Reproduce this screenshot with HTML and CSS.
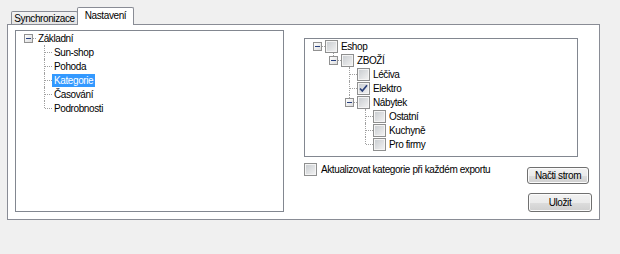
FILE: index.html
```html
<!DOCTYPE html>
<html lang="cs">
<head>
  <meta charset="UTF-8" />
  <title>Nastavení</title>
  <link rel="stylesheet" href="styles.css">
</head>
<body>
  <div class="tabs">
    <div class="tab">Synchronizace</div>
    <div class="tab tab-active">Nastavení</div>
  </div>

  <div class="tab-panel">
    <div class="tree tree-sections">
      <div class="node"><span class="cell cell-root"><span class="expander"></span></span><span class="label">Základní</span></div>
      <div class="node"><span class="cell"></span><span class="cell cell-tee"></span><span class="label">Sun-shop</span></div>
      <div class="node"><span class="cell"></span><span class="cell cell-tee"></span><span class="label">Pohoda</span></div>
      <div class="node"><span class="cell"></span><span class="cell cell-tee"></span><span class="label label-selected">Kategorie</span></div>
      <div class="node"><span class="cell"></span><span class="cell cell-tee"></span><span class="label">Časování</span></div>
      <div class="node"><span class="cell"></span><span class="cell cell-end"></span><span class="label">Podrobnosti</span></div>
    </div>

    <div class="side">
      <div class="tree tree-categories">
        <div class="node"><span class="cell cell-root"><span class="expander"></span></span><span class="checkbox"></span><span class="label">Eshop</span></div>
        <div class="node"><span class="cell"></span><span class="cell cell-end"><span class="expander"></span></span><span class="checkbox"></span><span class="label">ZBOŽÍ</span></div>
        <div class="node"><span class="cell"></span><span class="cell"></span><span class="cell cell-tee"></span><span class="checkbox"></span><span class="label">Léčiva</span></div>
        <div class="node"><span class="cell"></span><span class="cell"></span><span class="cell cell-tee"></span><span class="checkbox checkbox-checked"><svg width="11" height="11" viewBox="0 0 11 11"><path d="M2 5.5 L4.3 8 L9 2.2" fill="none" stroke="#2a3f78" stroke-width="1.7"/></svg></span><span class="label">Elektro</span></div>
        <div class="node"><span class="cell"></span><span class="cell"></span><span class="cell cell-end"><span class="expander"></span></span><span class="checkbox"></span><span class="label">Nábytek</span></div>
        <div class="node"><span class="cell"></span><span class="cell"></span><span class="cell"></span><span class="cell cell-tee"></span><span class="checkbox"></span><span class="label">Ostatní</span></div>
        <div class="node"><span class="cell"></span><span class="cell"></span><span class="cell"></span><span class="cell cell-tee"></span><span class="checkbox"></span><span class="label">Kuchyně</span></div>
        <div class="node"><span class="cell"></span><span class="cell"></span><span class="cell"></span><span class="cell cell-end"></span><span class="checkbox"></span><span class="label">Pro firmy</span></div>
      </div>

      <div class="side-row">
        <label class="check-label"><span class="checkbox"></span><span>Aktualizovat kategorie při každém exportu</span></label>
        <button class="btn btn-load">Načti strom</button>
      </div>

      <button class="btn btn-save">Uložit</button>
    </div>
  </div>
</body>
</html>
```

FILE: styles.css
```css
body {
  margin: 0;
  background-color: #f0f0f0;
  font-family: 'Liberation Sans', Arial, sans-serif;
  font-size: 10px;
  letter-spacing: -0.4px;
  color: #000;
}

/* Tab strip */
.tabs {
  display: flex;
  align-items: flex-end;
  margin-top: 7px;
  padding-left: 11px;
}

.tab {
  box-sizing: border-box;
  width: 67px;
  height: 13px;
  display: flex;
  align-items: center;
  justify-content: center;
  border: 1px solid #898c95;
  border-bottom: none;
  border-radius: 2px 2px 0 0;
  background: linear-gradient(#f3f3f3, #e3e3e3);
}

.tab-active {
  position: relative;
  z-index: 1;
  width: 57px;
  height: 18px;
  margin-left: -1px;
  margin-bottom: -1px;
  padding-bottom: 3px;
  background: #fff;
}

.tab-panel {
  box-sizing: border-box;
  width: 593px;
  height: 196px;
  margin-left: 7px;
  padding: 5px 0 0 7px;
  display: flex;
  align-items: flex-start;
  background: #fff;
  border: 1px solid #898c95;
}

/* Tree views */
.tree {
  box-sizing: border-box;
  padding-left: 4px;
  background: #fff;
  border: 1px solid #828790;
}

.tree-sections {
  width: 269px;
  height: 182px;
}

.tree-categories {
  width: 274px;
  height: 119px;
}

.node {
  display: flex;
  align-items: center;
  height: 14px;
  white-space: nowrap;
}

.cell {
  position: relative;
  flex: none;
  width: 16px;
  height: 14px;
}

.cell-tee::before,
.cell-end::before {
  content: '';
  position: absolute;
  left: 8px;
  top: 0;
  height: 14px;
  border-left: 1px dotted #a0a0a0;
}

.cell-end::before {
  height: 7px;
}

.cell-root::after,
.cell-tee::after,
.cell-end::after {
  content: '';
  position: absolute;
  left: 9px;
  right: 0;
  top: 7px;
  border-top: 1px dotted #a0a0a0;
}

.expander {
  position: absolute;
  z-index: 1;
  left: 4px;
  top: 3px;
  width: 9px;
  height: 9px;
  box-sizing: border-box;
  border: 1px solid #919191;
  background: linear-gradient(135deg, #ffffff, #dcdcdc);
}

.expander::before {
  content: '';
  position: absolute;
  left: 1px;
  top: 3px;
  width: 5px;
  height: 1px;
  background: #27407e;
}

.label {
  height: 13px;
  line-height: 13px;
  padding: 0 2px;
}

.label-selected {
  background-color: #3399ff;
  color: #fff;
}

.checkbox {
  box-sizing: border-box;
  flex: none;
  width: 13px;
  height: 13px;
  display: flex;
  align-items: center;
  justify-content: center;
  border: 1px solid #8e8f8f;
  background: linear-gradient(135deg, #c6cace, #f4f4f4);
  box-shadow: inset 0 0 0 1px #f4f4f4;
}

.tree .checkbox {
  margin-right: 1px;
}

/* Right column */
.side {
  display: flex;
  flex-direction: column;
  width: 288px;
  margin: 8px 0 0 20px;
}

.side-row {
  display: flex;
  align-items: flex-start;
  margin-top: 6px;
}

.check-label {
  display: flex;
  align-items: center;
  gap: 4px;
  line-height: 13px;
}

.btn {
  box-sizing: border-box;
  padding: 0;
  font: inherit;
  letter-spacing: inherit;
  color: #000;
  border: 1px solid #707070;
  border-radius: 3px;
  background: linear-gradient(#f2f2f2 0%, #ebebeb 50%, #dddddd 51%, #cfcfcf 100%);
  box-shadow: inset 0 0 0 1px #fbfbfb;
}

.btn-load {
  width: 62px;
  height: 17px;
  margin: 4px 3px 0 auto;
}

.btn-save {
  align-self: flex-end;
  width: 64px;
  height: 19px;
  margin-top: 9px;
}
```
